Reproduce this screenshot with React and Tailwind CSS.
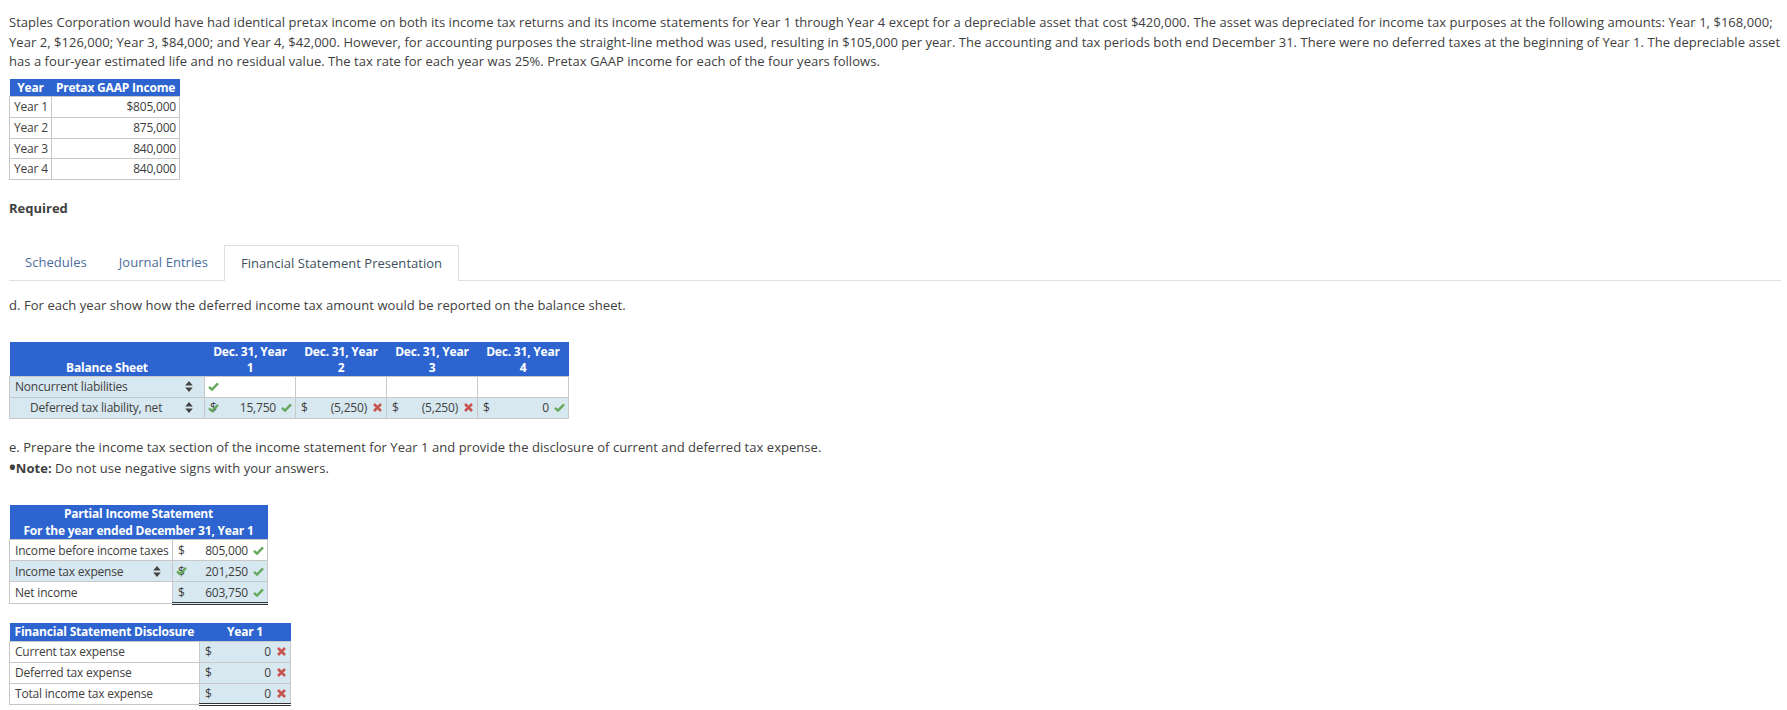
const Check = ({ className = '' }) => (
  <svg viewBox="0 0 11 9" className={`w-[11px] h-[9px] shrink-0 ${className}`} fill="none" stroke="#66a85c" strokeWidth="2.4">
    <polyline points="1,4.8 4,7.6 10,1.4" />
  </svg>
)
const Cross = () => (
  <svg viewBox="0 0 9 9" className="w-[9px] h-[9px] shrink-0 mr-[1px]" fill="none" stroke="#c9544f" strokeWidth="2.6">
    <path d="M1 1 L8 8 M8 1 L1 8" />
  </svg>
)
const Sort = () => (
  <svg viewBox="0 0 8 11" className="w-[8px] h-[11px] shrink-0" fill="#444">
    <path d="M4 0 L7.8 4.6 L0.2 4.6 Z M4 11 L7.8 6.4 L0.2 6.4 Z" />
  </svg>
)

const yearRows = [
  ['Year 1', '$805,000', 'h-[21px]'],
  ['Year 2', '875,000', 'h-[21px]'],
  ['Year 3', '840,000', 'h-[20px]'],
  ['Year 4', '840,000', 'h-[21px]'],
]

function Money({ value, mark, overlap }) {
  return (
    <div className="flex items-center h-full pl-[5px] pr-[3px]">
      <span className="relative w-[12px]">
        $
        {overlap && <Check className="absolute left-[-2px] top-1/2 -translate-y-1/2" />}
      </span>
      <span className="ml-auto">{value}</span>
      <span className="w-[16px] flex justify-end">{mark === 'ok' ? <Check /> : <Cross />}</span>
    </div>
  )
}

export default function App() {
  return (
    <div className="w-[1787px] h-[710px] overflow-hidden bg-white text-[#404040] text-[13px] leading-[20px] font-['Open_Sans',sans-serif] pl-[9px] pt-[13px]">
      <p className="w-[1778px] leading-[19.5px] tracking-[0.04px]">
        Staples Corporation would have had identical pretax income on both its income tax returns and its income statements for Year 1 through Year 4 except for a depreciable asset that cost $420,000. The asset was depreciated for income tax purposes at the following amounts: Year 1, $168,000; Year 2, $126,000; Year 3, $84,000; and Year 4, $42,000. However, for accounting purposes the straight-line method was used, resulting in $105,000 per year. The accounting and tax periods both end December 31. There were no deferred taxes at the beginning of Year 1. The depreciable asset has a four-year estimated life and no residual value. The tax rate for each year was 25%. Pretax GAAP income for each of the four years follows.
      </p>

      <table className="mt-[7px] border-collapse table-fixed w-[171px] text-[12px] leading-[16px] tracking-[-0.2px]">
        <colgroup>
          <col className="w-[42px]" />
          <col />
        </colgroup>
        <thead>
          <tr className="bg-[#2d64d0] text-white h-[18px]">
            <th className="text-center font-bold pt-[1px]">Year</th>
            <th className="text-center font-bold pt-[1px] whitespace-nowrap">Pretax GAAP Income</th>
          </tr>
        </thead>
        <tbody>
          {yearRows.map(([y, v, h]) => (
            <tr key={y} className={h}>
              <td className="border border-[#c8c8c8] pl-[4px] whitespace-nowrap">{y}</td>
              <td className="border border-[#c8c8c8] pr-[3px] text-right">{v}</td>
            </tr>
          ))}
        </tbody>
      </table>

      <p className="mt-[18px] font-bold">Required</p>

      <div className="flex items-end h-[63px] border-b border-[#dcdfe4] w-[1772px]">
        <div className="px-[16px] pb-[8px] text-[#4a6d9c] tracking-[0.05px]">Schedules</div>
        <div className="px-[16px] pb-[8px] text-[#4a6d9c] tracking-[0.05px]">Journal Entries</div>
        <div className="px-[16px] pt-[7px] h-[36px] mb-[-1px] border border-b-0 border-[#dcdfe4] bg-white text-[#3f5060] tracking-[0.03px] whitespace-nowrap">Financial Statement Presentation</div>
      </div>

      <p className="mt-[14px] tracking-[0.06px]">d. For each year show how the deferred income tax amount would be reported on the balance sheet.</p>

      <table className="mt-[27px] border-collapse table-fixed w-[559px] text-[12px] leading-[16px] tracking-[-0.2px]">
        <colgroup>
          <col className="w-[195px]" />
          <col className="w-[91px]" />
          <col className="w-[91px]" />
          <col className="w-[91px]" />
          <col className="w-[91px]" />
        </colgroup>
        <thead>
          <tr className="bg-[#2d64d0] text-white h-[34px]">
            <th className="align-bottom text-center font-bold">Balance Sheet</th>
            {[1, 2, 3, 4].map((n) => (
              <th key={n} className="align-bottom text-center font-bold">Dec. 31, Year<br />{n}</th>
            ))}
          </tr>
        </thead>
        <tbody>
          <tr className="h-[21px]">
            <td className="bg-[#d7e8f0] border border-[#c8c8c8] pl-[5px] pr-[11px]">
              <div className="flex items-center justify-between">Noncurrent liabilities<Sort /></div>
            </td>
            <td className="border border-[#c8c8c8] pl-[3px]"><Check /></td>
            <td className="border border-[#c8c8c8]" />
            <td className="border border-[#c8c8c8]" />
            <td className="border border-[#c8c8c8]" />
          </tr>
          <tr className="h-[21px] bg-[#d7e8f0]">
            <td className="border border-[#c8c8c8] pl-[20px] pr-[11px]">
              <div className="flex items-center justify-between">Deferred tax liability, net<Sort /></div>
            </td>
            <td className="border border-[#c8c8c8]"><Money value="15,750" mark="ok" overlap /></td>
            <td className="border border-[#c8c8c8]"><Money value="(5,250)" mark="no" /></td>
            <td className="border border-[#c8c8c8]"><Money value="(5,250)" mark="no" /></td>
            <td className="border border-[#c8c8c8]"><Money value="0" mark="ok" /></td>
          </tr>
        </tbody>
      </table>

      <p className="mt-[18px] tracking-[0.04px]">e. Prepare the income tax section of the income statement for Year 1 and provide the disclosure of current and deferred tax expense.</p>
      <p className="tracking-[0.04px] h-[20px]"><b><span className="text-[18px] leading-[20px] align-[-1px]">•</span>Note:</b> Do not use negative signs with your answers.</p>

      <table className="mt-[28px] border-collapse table-fixed w-[259px] text-[12px] leading-[17px] tracking-[-0.2px]">
        <colgroup>
          <col className="w-[163px]" />
          <col />
        </colgroup>
        <thead>
          <tr className="bg-[#2d64d0] text-white">
            <th colSpan={2} className="text-center font-bold h-[35px]">Partial Income Statement<br />For the year ended December 31, Year 1</th>
          </tr>
        </thead>
        <tbody>
          <tr className="h-[21px]">
            <td className="border border-[#c8c8c8] pl-[5px] whitespace-nowrap">Income before income taxes</td>
            <td className="border border-[#c8c8c8]"><Money value="805,000" mark="ok" /></td>
          </tr>
          <tr className="h-[21px]">
            <td className="bg-[#d7e8f0] border border-[#c8c8c8] pl-[5px] pr-[11px]">
              <div className="flex items-center justify-between">Income tax expense<Sort /></div>
            </td>
            <td className="bg-[#d7e8f0] border border-[#c8c8c8] border-b-black"><Money value="201,250" mark="ok" overlap /></td>
          </tr>
          <tr className="h-[22px]">
            <td className="border border-[#c8c8c8] pl-[5px]">Net income</td>
            <td className="bg-[#d7e8f0] border border-[#c8c8c8] border-b-[3px] border-b-[#333] border-double"><Money value="603,750" mark="ok" /></td>
          </tr>
        </tbody>
      </table>

      <table className="mt-[18px] border-collapse table-fixed w-[282px] text-[12px] leading-[17px] tracking-[-0.2px]">
        <colgroup>
          <col className="w-[190px]" />
          <col />
        </colgroup>
        <thead>
          <tr className="bg-[#2d64d0] text-white h-[18px]">
            <th className="text-left pl-[5px] font-bold whitespace-nowrap">Financial Statement Disclosure</th>
            <th className="text-center font-bold">Year 1</th>
          </tr>
        </thead>
        <tbody>
          {['Current tax expense', 'Deferred tax expense', 'Total income tax expense'].map((label, i) => (
            <tr key={label} className="h-[21px]">
              <td className="border border-[#c8c8c8] pl-[5px] whitespace-nowrap">{label}</td>
              <td className={`bg-[#d7e8f0] border border-[#c8c8c8] ${i === 1 ? 'border-b-black' : ''} ${i === 2 ? 'border-b-[3px] border-b-[#333] border-double' : ''}`}>
                <Money value="0" mark="no" />
              </td>
            </tr>
          ))}
        </tbody>
      </table>
    </div>
  )
}
